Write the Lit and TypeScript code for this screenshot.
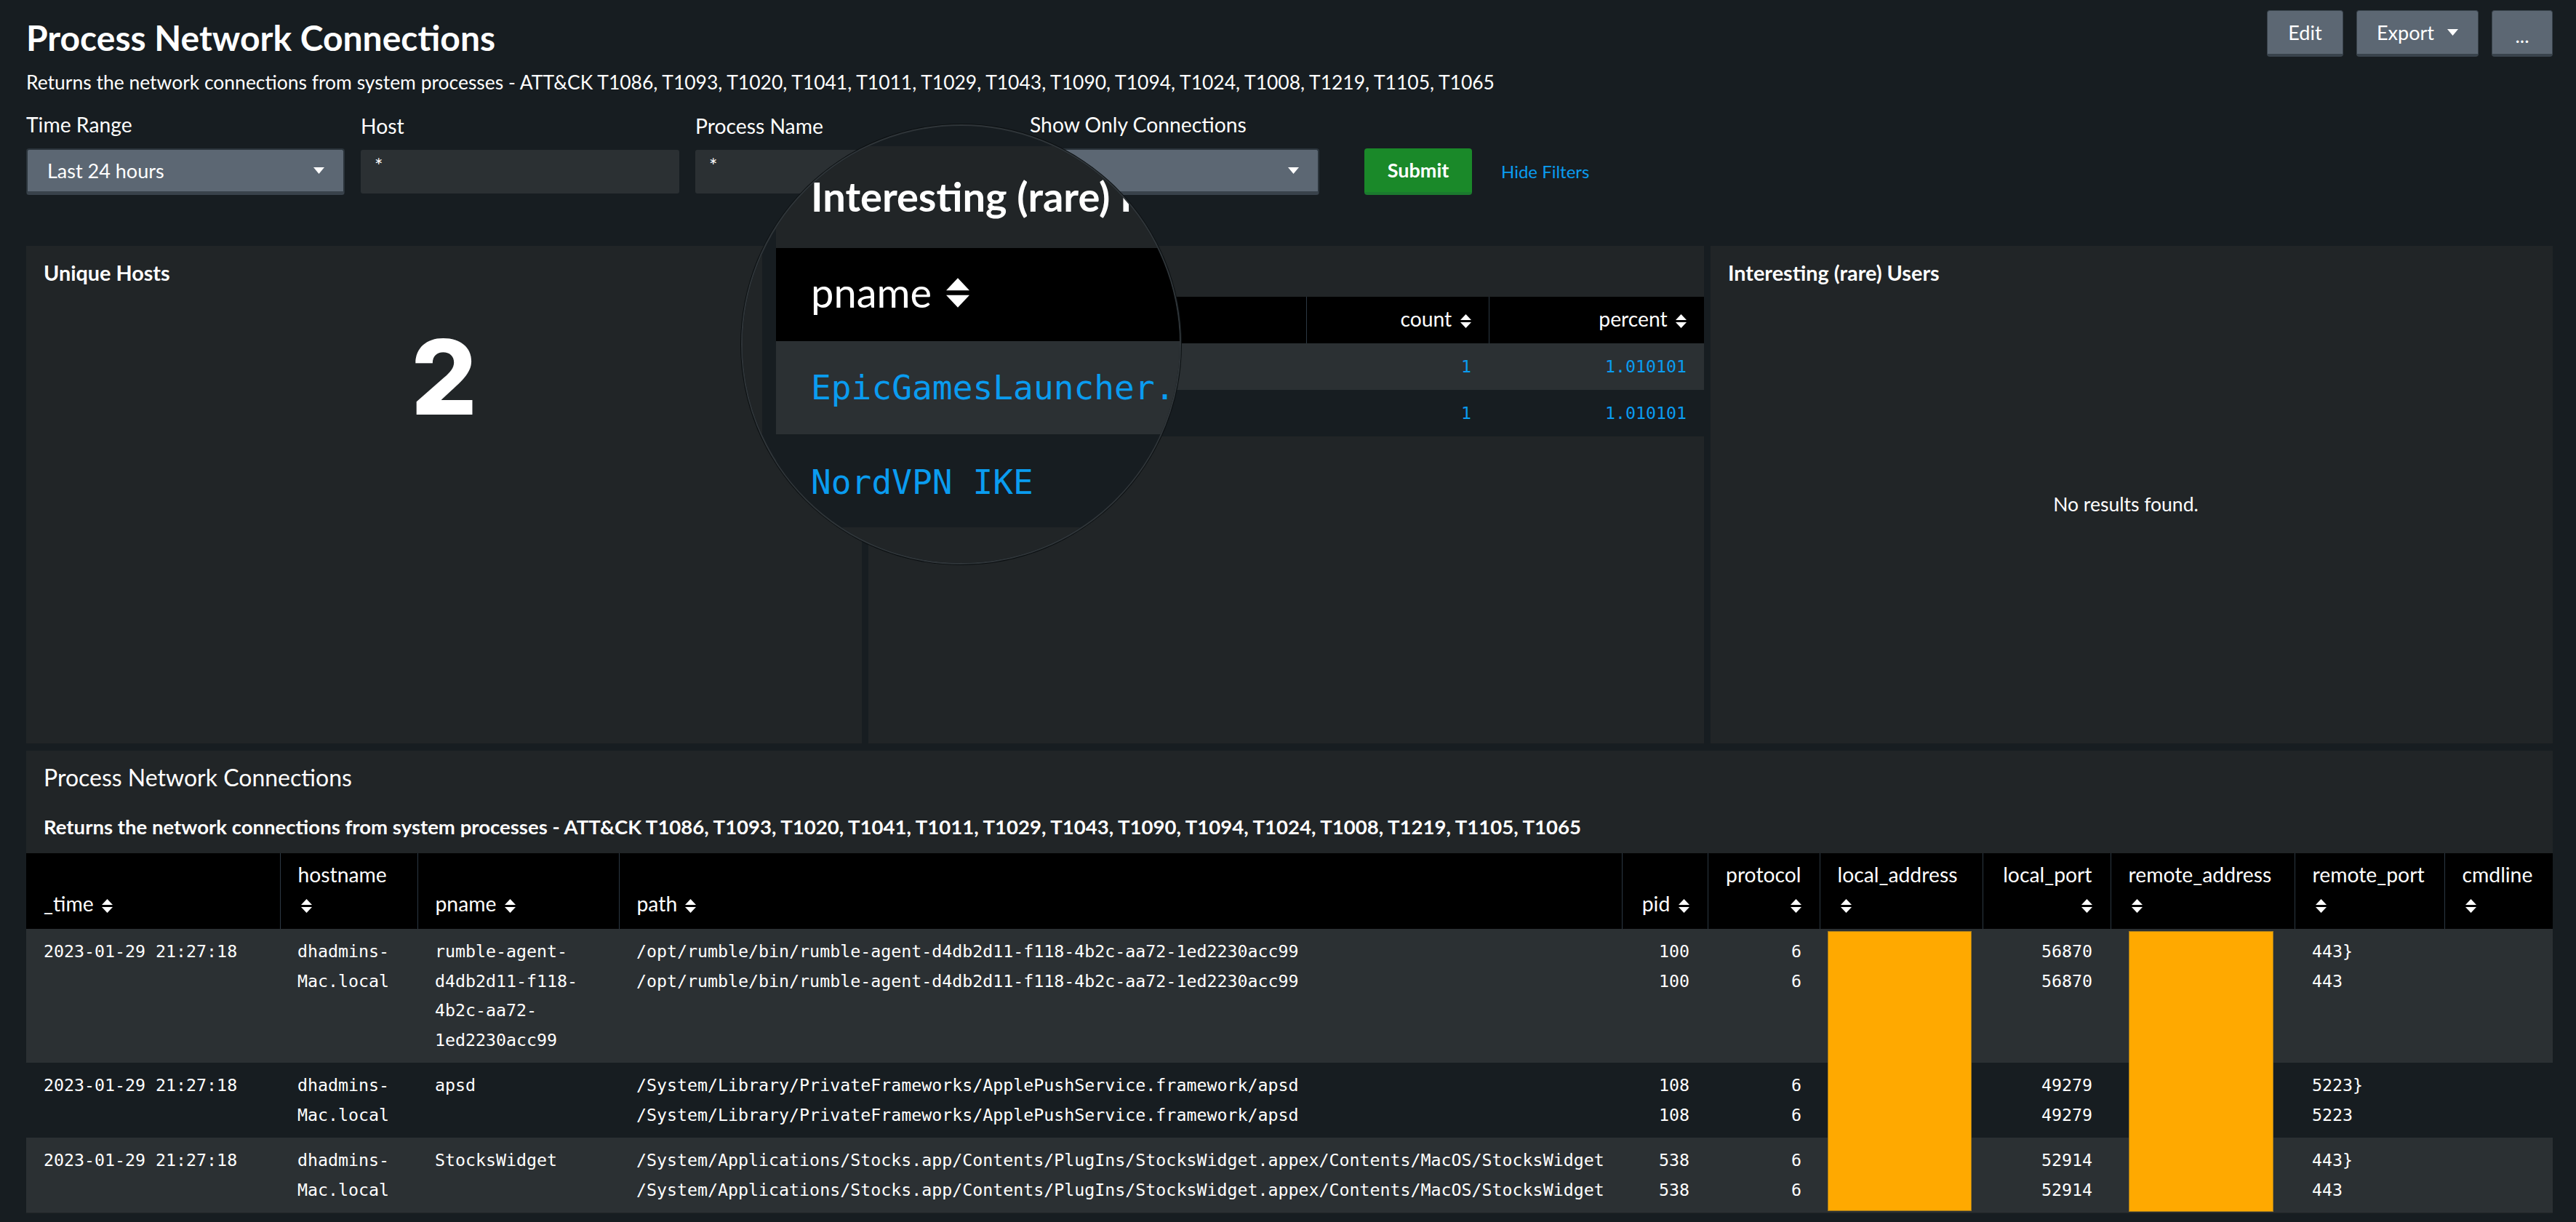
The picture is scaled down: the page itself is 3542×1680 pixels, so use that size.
import { LitElement, html, css, svg } from "lit";
import { customElement } from "lit/decorators.js";

const DESC = "Returns the network connections from system processes - ATT&CK T1086, T1093, T1020, T1041, T1011, T1029, T1043, T1090, T1094, T1024, T1008, T1219, T1105, T1065";

interface Col { name: string; right?: boolean; wrap?: boolean; cls: string; }
const COLS: Col[] = [
  { name: "_time", cls: "c-time" },
  { name: "hostname", wrap: true, cls: "c-host" },
  { name: "pname", cls: "c-pname" },
  { name: "path", cls: "c-path" },
  { name: "pid", right: true, cls: "c-pid" },
  { name: "protocol", right: true, wrap: true, cls: "c-proto" },
  { name: "local_address", wrap: true, cls: "c-laddr" },
  { name: "local_port", right: true, wrap: true, cls: "c-lport" },
  { name: "remote_address", wrap: true, cls: "c-raddr" },
  { name: "remote_port", wrap: true, cls: "c-rport" },
  { name: "cmdline", wrap: true, cls: "c-cmd" },
];

const RUMBLE = "/opt/rumble/bin/rumble-agent-d4db2d11-f118-4b2c-aa72-1ed2230acc99";
const APSD = "/System/Library/PrivateFrameworks/ApplePushService.framework/apsd";
const STOCKS = "/System/Applications/Stocks.app/Contents/PlugIns/StocksWidget.appex/Contents/MacOS/StocksWidget";
const HOST = ["dhadmins-", "Mac.local"];
const TIME = ["2023-01-29 21:27:18"];

const ROWS: string[][][] = [
  [TIME, HOST, ["rumble-agent-", "d4db2d11-f118-", "4b2c-aa72-", "1ed2230acc99"], [RUMBLE, RUMBLE], ["100", "100"], ["6", "6"], [], ["56870", "56870"], [], ["443}", "443"], []],
  [TIME, HOST, ["apsd"], [APSD, APSD], ["108", "108"], ["6", "6"], [], ["49279", "49279"], [], ["5223}", "5223"], []],
  [TIME, HOST, ["StocksWidget"], [STOCKS, STOCKS], ["538", "538"], ["6", "6"], [], ["52914", "52914"], [], ["443}", "443"], []],
];

const sortIcon = svg`<svg class="sort" viewBox="0 0 15 19" aria-hidden="true"><path d="M7.5 0 15 8H0Z M0 11H15L7.5 19Z" fill="#fff"/></svg>`;
const caret = svg`<svg class="caret" viewBox="0 0 15 9" aria-hidden="true"><path d="M0 0H15L7.5 9Z" fill="#fff"/></svg>`;

@customElement("app-root")
export class AppRoot extends LitElement {
  static styles = css`
    :host { display: block; }
    * { box-sizing: border-box; }
    .page {
      position: relative; width: 3542px; height: 1680px; overflow: hidden;
      background: #171d21; color: #fff; padding: 14px 32px 0 36px;
      font-family: Lato, "Liberation Sans", sans-serif; font-size: 28.3px; line-height: 36px;
    }
    .head { display: flex; justify-content: space-between; align-items: flex-start; }
    h1 { margin: 11px 0 16px; font-size: 48px; line-height: 54px; font-weight: 700; }
    .desc { margin: 0; font-size: 26.46px; }
    .actions { display: flex; gap: 18px; }
    .btn {
      display: flex; align-items: center; justify-content: center; gap: 18px; height: 64px;
      background: #5c6773; border: 1px solid #39434c; border-bottom: 4px solid #39434c; border-radius: 4px;
      color: #fff; font-size: 27px;
    }
    .b-edit { width: 105px; }
    .b-export { width: 168px; }
    .b-more { width: 84px; padding-top: 8px; }
    .caret { width: 15px; height: 9px; display: block; }
    .form { display: flex; gap: 22px; margin-top: 22px; align-items: flex-end; }
    .field { width: 438px; }
    .field-last { width: 398px; }
    .label { margin-bottom: 15px; }
    .select {
      height: 64px; display: flex; align-items: center; justify-content: space-between;
      background: #5c6773; border: 2px solid #2b343b; border-bottom: 5px solid #39424b; border-radius: 4px;
      padding: 0 26px 0 27px; font-size: 27px;
    }
    .input {
      height: 60px; margin: 2px 0; background: #2b3033; border-radius: 3px; padding: 4px 19px 0; font-size: 27px;
    }
    .submit {
      margin-left: 40px; width: 148px; height: 64px; display: flex; align-items: center; justify-content: center;
      background: #1a8929; border-bottom: 4px solid #1b7a2e; border-radius: 4px; font-weight: 700; font-size: 27px;
    }
    .hide { height: 64px; display: flex; align-items: center; color: #0a9cf0; font-size: 24px; margin-left: 18px; }
    .row1 { display: grid; grid-template-columns: 1149px 1149px 1fr; column-gap: 9px; margin-top: 70px; height: 684px; }
    .panel { background: #212527; padding: 19px 0 0; }
    .ptitle { font-weight: 700; font-size: 28.8px; padding: 0 24px; margin-bottom: 15px; }
    .single { text-align: center; font-family: Inter, Lato, sans-serif; font-size: 143px; line-height: 200px; font-weight: 800; margin-top: 25px; }
    .empty { text-align: center; margin-top: 282px; padding-right: 16px; font-size: 26.5px; }
    table { border-collapse: collapse; table-layout: fixed; width: 100%; }
    th { background: #000; font-weight: 400; padding: 0 24px; border-left: 1px solid #2c3843; text-align: left; font-size: 28.3px; }
    th:first-child { border-left: 0; }
    .sort { width: 15px; height: 19px; display: inline-block; vertical-align: -2px; margin-left: 4px; }
    .r { text-align: right; }
    td { font-family: "DejaVu Sans Mono", "Liberation Mono", monospace; font-size: 23.27px; white-space: nowrap; }
    tr.odd td { background: #2b3033; }
    tr.even td { background: #171d21; }
    .t2 th { height: 64px; padding-bottom: 5px; }
    .t2 td { height: 64px; padding: 0 24px; color: #0a9cf0; }
    .c2-name { width: 602px; }
    .c2-count { width: 251px; }
    .main { margin-top: 10px; height: 636px; background: #212527; padding-top: 18px; }
    .main-title { font-size: 32px; line-height: 38px; padding: 0 24px; }
    .main-sub { font-weight: 700; font-size: 27.55px; line-height: 36px; padding: 0 24px; margin-top: 31px; margin-bottom: 18px; }
    .tw { position: relative; }
    .t4 th { height: 104px; vertical-align: bottom; padding: 0 25px 15px 24px; line-height: 40px; white-space: nowrap; }
    .t4 td { vertical-align: top; padding: 11px 25px 11px 24px; line-height: 40.5px; }
    .c-time { width: 349px; } .c-host { width: 189px; } .c-pname { width: 277px; }
    .c-path { width: 1379px; } .c-pid { width: 118px; } .c-proto { width: 154px; }
    .c-laddr { width: 224px; } .c-lport { width: 176px; } .c-raddr { width: 253px; }
    .c-rport { width: 206px; } .c-cmd { width: 149px; }
    .redact { position: absolute; top: 107px; height: 385px; background: #ffa900; border: 1px solid #a37a1c; }
    .red-a { left: 2477px; width: 198px; }
    .red-b { left: 2891px; width: 199px; height: 386px; }
    .mag {
      position: absolute; left: 1019px; top: 171px; width: 605px; height: 605px; border-radius: 50%; overflow: hidden;
      background: #171d21; border: 2px solid #2f3539; box-shadow: 0 0 0 1px #0c1012;
      display: flex; gap: 19px; padding-top: 28px;
    }
    .mag-left { flex: 0 0 27px; background: #212527; }
    .mag-panel { flex: 0 0 800px; background: #212527; padding-top: 42px; }
    .mag-title { font-size: 56px; line-height: 54px; font-weight: 700; padding-left: 48px; white-space: nowrap; margin-bottom: 44px; }
    .mag-row { height: 128px; display: flex; align-items: center; padding-left: 48px; white-space: nowrap; }
    .mag-head { background: #000; font-size: 56px; gap: 20px; padding-bottom: 6px; }
    .mag-head .sort { width: 32px; height: 41px; margin: 0; }
    .mag-mono { font-family: "DejaVu Sans Mono", "Liberation Mono", monospace; font-size: 46.2px; color: #0a9cf0; }
    .mag-a { background: #2b3033; }
    .mag-b { background: #171d21; padding-top: 4px; }
  `;

  private cell(lines: string[]) {
    return lines.map((l) => html`<div>${l}</div>`);
  }

  render() {
    return html`
      <div class="page">
        <div class="head">
          <div>
            <h1>Process Network Connections</h1>
            <p class="desc">${DESC}</p>
          </div>
          <div class="actions">
            <div class="btn b-edit">Edit</div>
            <div class="btn b-export">Export ${caret}</div>
            <div class="btn b-more">...</div>
          </div>
        </div>

        <div class="form">
          <div class="field"><div class="label">Time Range</div><div class="select">Last 24 hours ${caret}</div></div>
          <div class="field"><div class="label">Host</div><div class="input">*</div></div>
          <div class="field"><div class="label">Process Name</div><div class="input">*</div></div>
          <div class="field field-last"><div class="label">Show Only Connections</div><div class="select"><span></span>${caret}</div></div>
          <div class="submit">Submit</div>
          <div class="hide">Hide Filters</div>
        </div>

        <div class="row1">
          <div class="panel">
            <div class="ptitle">Unique Hosts</div>
            <div class="single">2</div>
          </div>
          <div class="panel">
            <div class="ptitle">Interesting (rare) Processes</div>
            <table class="t2">
              <colgroup><col class="c2-name" /><col class="c2-count" /><col /></colgroup>
              <thead><tr>
                <th>pname ${sortIcon}</th>
                <th class="r">count ${sortIcon}</th>
                <th class="r">percent ${sortIcon}</th>
              </tr></thead>
              <tbody>
                <tr class="odd"><td>EpicGamesLauncher.</td><td class="r">1</td><td class="r">1.010101</td></tr>
                <tr class="even"><td>NordVPN IKE</td><td class="r">1</td><td class="r">1.010101</td></tr>
              </tbody>
            </table>
          </div>
          <div class="panel">
            <div class="ptitle">Interesting (rare) Users</div>
            <div class="empty">No results found.</div>
          </div>
        </div>

        <div class="main">
          <div class="main-title">Process Network Connections</div>
          <div class="main-sub">${DESC}</div>
          <div class="tw">
            <table class="t4">
              <colgroup>${COLS.map((c) => html`<col class=${c.cls} />`)}</colgroup>
              <thead><tr>
                ${COLS.map((c) => html`<th class=${c.right ? "r" : ""}>${c.name}${c.wrap ? html`<br />` : " "}${sortIcon}</th>`)}
              </tr></thead>
              <tbody>
                ${ROWS.map((row, i) => html`<tr class=${i % 2 ? "even" : "odd"}>
                  ${row.map((lines, j) => html`<td class=${COLS[j].right ? "r" : ""}>${this.cell(lines)}</td>`)}
                </tr>`)}
              </tbody>
            </table>
            <div class="redact red-a"></div>
            <div class="redact red-b"></div>
          </div>
        </div>

        <div class="mag">
          <div class="mag-left"></div>
          <div class="mag-panel">
            <div class="mag-title">Interesting (rare) Processes</div>
            <div class="mag-row mag-head">pname ${sortIcon}</div>
            <div class="mag-row mag-mono mag-a">EpicGamesLauncher.</div>
            <div class="mag-row mag-mono mag-b">NordVPN IKE</div>
          </div>
        </div>
      </div>
    `;
  }
}
